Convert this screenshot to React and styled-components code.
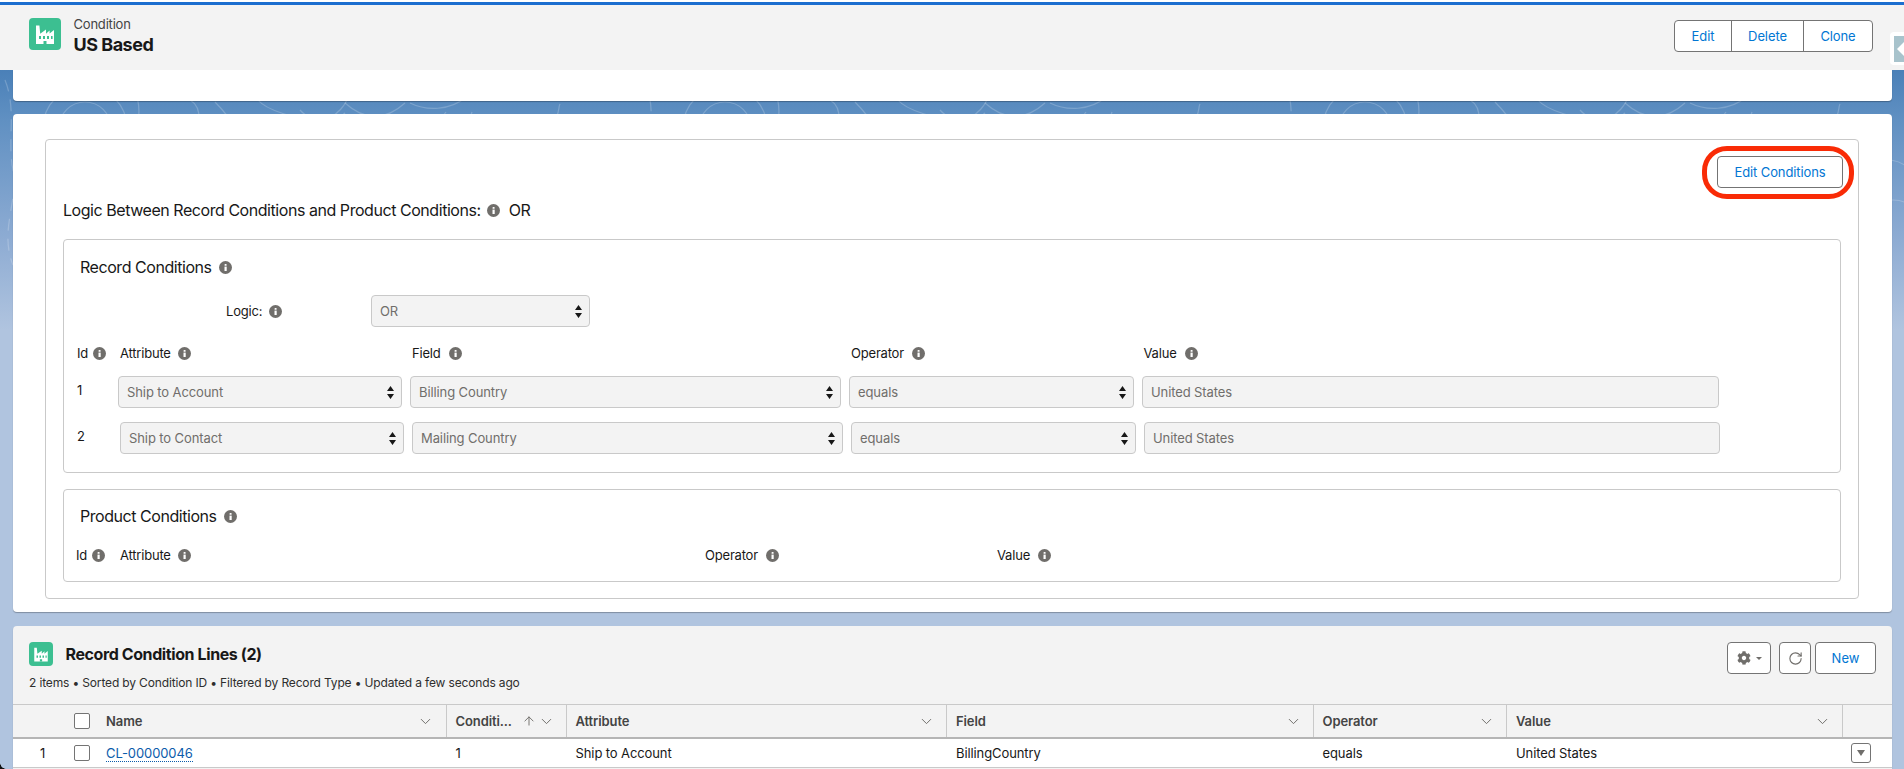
import React from "react";
import styled, { createGlobalStyle } from "styled-components";
import { ChevronDown, ArrowUp, RotateCw } from "lucide-react";
import { FaCog } from "react-icons/fa";

const GlobalStyle = createGlobalStyle`
  html, body { margin: 0; padding: 0; }
  body {
    font-family: "Inter", "Liberation Sans", sans-serif;
    font-size: 13px;
    color: #181818;
    background: #b0c4df;
  }
  * { box-sizing: border-box; }
`;

const Page = styled.div`
  position: relative;
  width: 1904px;
  height: 769px;
  overflow: hidden;
  background: linear-gradient(180deg, #4a80b8 70px, #6090c2 120px, #8eacd3 240px, #b0c4df 330px);
`;

const Swirls = styled.svg`
  position: absolute;
  left: 0;
  top: 70px;
  width: 1904px;
  height: 270px;
`;

const TopStrip = styled.div`
  position: relative;
  height: 5px;
  background: #fff;
  border-bottom: 3px solid #1b6ecf;
`;

const PageHeader = styled.header`
  position: relative;
  height: 65px;
  padding: 13px 31px 0 29px;
  display: flex;
  justify-content: space-between;
  align-items: flex-start;
  background: #f3f3f3;
`;

const HeaderTitle = styled.div`
  display: flex;
  gap: 12.5px;
  padding-top: 0;
`;

const IconTile = styled.div`
  width: ${(p) => p.$size}px;
  height: ${(p) => p.$size}px;
  border-radius: 4px;
  background: #3cbf91;
  flex: none;
  svg { display: block; width: 100%; height: 100%; }
`;

const TitleStack = styled.div`
  display: flex;
  flex-direction: column;
`;

const Eyebrow = styled.div`
  font-size: 13px;
  line-height: 14px;
  margin-top: -1px;
  letter-spacing: -0.2px;
  color: #444;
`;

const RecordName = styled.div`
  font-size: 18px;
  line-height: 22px;
  margin-top: 3px;
  font-weight: 700;
  letter-spacing: -0.5px;
`;

const ButtonGroup = styled.div`
  display: flex;
  height: 32px;
  margin-top: 2px;
  border: 1px solid #747474;
  border-radius: 4px;
  background: #fff;
  overflow: hidden;
`;

const GroupButton = styled.div`
  width: ${(p) => p.$width}px;
  display: flex;
  align-items: center;
  justify-content: center;
  color: #0176d3;
  letter-spacing: -0.1px;
  & + & { border-left: 1px solid #747474; }
`;

const SideTab = styled.div`
  position: absolute;
  right: 0;
  top: 32px;
  width: 14px;
  height: 33px;
  padding: 4px 0 3px 4px;
  background: #fff;
  border-radius: 4px 0 0 4px;
`;

const SideTabInner = styled.div`
  height: 100%;
  display: flex;
  align-items: center;
  padding-left: 3px;
  background: #a8c3cc;
  &::before {
    content: "";
    border-style: solid;
    border-width: 7px 7px 7px 0;
    border-color: transparent #fff transparent transparent;
  }
`;

const Main = styled.main`
  position: relative;
  padding: 0 12px 0 13px;
`;

const Card = styled.section`
  background: #fff;
  border-radius: 4px;
  box-shadow: 0 1px 1px rgba(0, 0, 0, 0.28);
`;

const BlankCard = styled(Card)`
  height: 31px;
  border-radius: 0 0 4px 4px;
`;

const ConditionsCard = styled(Card)`
  margin-top: 13px;
  height: 498px;
  padding: 25px 33px 0 32px;
`;

const OuterBox = styled.div`
  height: 460px;
  padding: 16px 17px 0;
  border: 1px solid #c9c9c9;
  border-radius: 4px;
`;

const ActionRow = styled.div`
  display: flex;
  justify-content: flex-end;
  margin-right: -2px;
`;

const EditButton = styled.div`
  position: relative;
  width: 126px;
  height: 32px;
  display: flex;
  align-items: center;
  justify-content: center;
  border: 1px solid #747474;
  border-radius: 4px;
  color: #0176d3;
  letter-spacing: -0.1px;
  &::after {
    content: "";
    position: absolute;
    top: -11px;
    bottom: -12px;
    left: -16px;
    right: -12px;
    border: 5px solid #f92b06;
    border-radius: 25px;
  }
`;

const LogicLine = styled.div`
  display: flex;
  align-items: center;
  height: 20px;
  margin: 12px 0 19px;
  font-size: 16px;
  letter-spacing: -0.45px;
`;

const LogicValue = styled.span`
  margin-left: 9px;
`;

const InnerBox = styled.div`
  padding: ${(p) => p.$pad};
  border: 1px solid #c9c9c9;
  border-radius: 4px;
  & + & { margin-top: 16px; }
`;

const BoxHeading = styled.h3`
  display: flex;
  align-items: center;
  height: 20px;
  margin: 0 0 0 16px;
  font-size: 16px;
  font-weight: 400;
  letter-spacing: -0.45px;
`;

const InfoWrap = styled.svg`
  width: 13px;
  height: 13px;
  flex: none;
  margin-left: ${(p) => p.$gap ?? 7}px;
`;

const LogicRow = styled.div`
  display: flex;
  align-items: center;
  margin: 18px 0 16px;
  padding-left: 162px;
`;

const LogicLabel = styled.div`
  width: 145px;
  display: flex;
  align-items: center;
  letter-spacing: -0.2px;
`;

const ColumnHeads = styled.div`
  display: flex;
  height: 20px;
  padding-left: ${(p) => p.$left}px;
`;

const ColumnHead = styled.div`
  width: ${(p) => p.$width}px;
  display: flex;
  align-items: center;
  letter-spacing: -0.2px;
`;

const ConditionRow = styled.div`
  display: flex;
  gap: 8px;
  margin-top: ${(p) => p.$top}px;
`;

const RowId = styled.div`
  width: ${(p) => p.$width}px;
  margin-right: -8px;
  padding-left: 13px;
  line-height: 28px;
`;

const Control = styled.div`
  position: relative;
  width: ${(p) => p.$width}px;
  height: 32px;
  padding-left: 8px;
  display: flex;
  align-items: center;
  flex: none;
  background: #f3f3f3;
  border: 1px solid #c9c9c9;
  border-radius: 4px;
  color: #706e6b;
  letter-spacing: -0.1px;
`;

const UpDown = styled.svg`
  position: absolute;
  right: 7px;
  top: 9px;
  width: 7px;
  height: 13px;
  fill: #181818;
`;

const RelatedCard = styled(Card)`
  margin-top: 14px;
  background: #f3f3f3;
  height: 160px;
`;

const RelatedHeader = styled.div`
  height: 78px;
  padding: 16px 16px 0;
`;

const RelatedTop = styled.div`
  display: flex;
  justify-content: space-between;
  height: 32px;
`;

const RelatedTitle = styled.div`
  display: flex;
  gap: 12.5px;
  font-size: 16px;
  line-height: 24px;
  font-weight: 700;
  letter-spacing: -0.4px;
`;

const ListActions = styled.div`
  display: flex;
  gap: 4px;
`;

const ListButton = styled.div`
  width: ${(p) => p.$width}px;
  height: 32px;
  margin-right: ${(p) => p.$after || 0}px;
  display: flex;
  align-items: center;
  justify-content: center;
  gap: 5px;
  background: #fff;
  border: 1px solid #747474;
  border-radius: 4px;
  color: ${(p) => (p.$primary ? "#0176d3" : "#706e6b")};
`;

const MiniCaret = styled.span`
  border-style: solid;
  border-width: 3.5px 3px 0;
  border-color: #706e6b transparent transparent;
`;

const ListMeta = styled.div`
  margin-top: 1px;
  font-size: 12px;
  line-height: 16px;
  letter-spacing: -0.15px;
  color: #2e2e2e;
`;

const TABLE_COLUMNS = "60px 32px 341.5px 120px 380.5px 366.5px 193.5px 336px 49px";

const TableHead = styled.div`
  display: grid;
  grid-template-columns: ${TABLE_COLUMNS};
  height: 35px;
  border-top: 1px solid #c9c9c9;
  border-bottom: 2px solid #b5b5b5;
`;

const HeadCell = styled.div`
  display: flex;
  align-items: center;
  justify-content: space-between;
  height: 32px;
  padding: 0 ${(p) => (p.$first ? 12 : 11)}px 0 ${(p) => (p.$first ? 1 : 9)}px;
  border-right: ${(p) => (p.$plain ? "none" : "1px solid #c9c9c9")};
  font-weight: 600;
  color: #444;
  letter-spacing: -0.1px;
  svg { color: #706e6b; flex: none; }
`;

const SortIcons = styled.span`
  display: flex;
  align-items: center;
  gap: 2px;
`;

const TableRow = styled.div`
  display: grid;
  grid-template-columns: ${TABLE_COLUMNS};
  align-items: center;
  height: 29px;
  background: #fff;
  border-bottom: 1px solid #c9c9c9;
`;

const RowCell = styled.div`
  padding-left: ${(p) => p.$left ?? 9}px;
  letter-spacing: -0.1px;
`;

const RowLink = styled.span`
  color: #0b5cab;
  border-bottom: 1px dotted #0b5cab;
`;

const CheckBox = styled.div`
  width: 16px;
  height: 16px;
  background: #fff;
  border: 1px solid #747474;
  border-radius: 2px;
`;

const RowMenu = styled.div`
  width: 20px;
  height: 20px;
  margin-left: 8px;
  display: flex;
  align-items: center;
  justify-content: center;
  border: 1px solid #747474;
  border-radius: 3px;
  &::before {
    content: "";
    border-style: solid;
    border-width: 6px 4px 0;
    border-color: #706e6b transparent transparent;
  }
`;

const WindowCorner = styled.div`
  position: absolute;
  left: 0;
  bottom: 0;
  width: 6px;
  height: 6px;
  background: radial-gradient(circle at 100% 0, transparent 5.5px, #111 6px);
`;

const InfoIcon = ({ gap }) => (
  <InfoWrap $gap={gap} viewBox="0 0 13 13">
    <circle cx="6.5" cy="6.5" r="6.5" fill="#706e6b" />
    <rect x="5.5" y="5.6" width="2.2" height="4.4" fill="#fff" />
    <rect x="5.5" y="2.9" width="2.2" height="1.9" rx="0.9" fill="#fff" />
  </InfoWrap>
);

const FactoryTile = ({ size }) => (
  <IconTile $size={size}>
    <svg viewBox="0 0 32 32">
      <path d="M7 26V7.5h3.4l.8 8.3 5.8-4.3v4.3l3.6-3.4v3.2l4.4-3.6V26z" fill="#fff" />
      <path d="M10 18h2v3h-2zM14 18h2v3h-2zM18 18h2v3h-2zM22 18h1.6v3H22zM14.5 23h3v3h-3z" fill="#3cbf91" />
    </svg>
  </IconTile>
);

const SelectField = ({ width, children }) => (
  <Control $width={width}>
    {children}
    <UpDown viewBox="0 0 7 13">
      <path d="M3.5 0 7 5H0zM0 8h7l-3.5 5z" />
    </UpDown>
  </Control>
);

const Background = () => (
  <Swirls viewBox="0 0 1904 270" fill="none">
    <defs>
      <pattern id="swirl" width="640" height="270" patternUnits="userSpaceOnUse">
        <g stroke="rgba(255,255,255,0.2)" strokeWidth="1.2">
          <circle cx="85" cy="58" r="26" />
          <circle cx="85" cy="58" r="42" />
          <path d="M5 10c12 30 2 60 8 90s-14 60 0 95" strokeDasharray="12 8" />
          <path d="M120 0c30 30 20 60 0 90" />
          <path d="M190 30c14 8 10 30 0 45" />
          <path d="M215 32c20 20 25 35 30 50" />
          <path d="M258 30c8 10 40 20 60 20s30-20 30-24" />
          <path d="M300 40c12 14 35 14 46 2" strokeDasharray="8 6" />
          <path d="M345 33c20 18 40 18 60 0" />
          <path d="M410 33c16 8 40 8 56-6" />
          <path d="M440 50l6-8M470 48l2-6M556 48c4-8 2-10 4-14" />
          <path d="M560 120c30-40 70-40 80 0" />
          <path d="M575 150c30-30 50-20 65-10" />
        </g>
      </pattern>
    </defs>
    <rect width="1904" height="270" fill="url(#swirl)" />
  </Swirls>
);

const App = () => (
  <Page>
    <GlobalStyle />
    <Background />
    <TopStrip />
    <PageHeader>
      <HeaderTitle>
        <FactoryTile size={32} />
        <TitleStack>
          <Eyebrow>Condition</Eyebrow>
          <RecordName>US Based</RecordName>
        </TitleStack>
      </HeaderTitle>
      <ButtonGroup>
        <GroupButton $width={56}>Edit</GroupButton>
        <GroupButton $width={72}>Delete</GroupButton>
        <GroupButton $width={69}>Clone</GroupButton>
      </ButtonGroup>
    </PageHeader>
    <SideTab>
      <SideTabInner />
    </SideTab>

    <Main>
      <BlankCard />

      <ConditionsCard>
        <OuterBox>
          <ActionRow>
            <EditButton>Edit Conditions</EditButton>
          </ActionRow>
          <LogicLine>
            Logic Between Record Conditions and Product Conditions:
            <InfoIcon gap={6} />
            <LogicValue>OR</LogicValue>
          </LogicLine>

          <InnerBox $pad="17px 0 18px">
            <BoxHeading>
              Record Conditions
              <InfoIcon />
            </BoxHeading>
            <LogicRow>
              <LogicLabel>
                Logic:
                <InfoIcon />
              </LogicLabel>
              <SelectField width={219}>OR</SelectField>
            </LogicRow>
            <ColumnHeads $left={13}>
              <ColumnHead $width={43}>
                Id
                <InfoIcon gap={5} />
              </ColumnHead>
              <ColumnHead $width={292}>
                Attribute
                <InfoIcon />
              </ColumnHead>
              <ColumnHead $width={439}>
                Field
                <InfoIcon gap={8} />
              </ColumnHead>
              <ColumnHead $width={292.5}>
                Operator
                <InfoIcon gap={8} />
              </ColumnHead>
              <ColumnHead $width={100}>
                Value
                <InfoIcon gap={8} />
              </ColumnHead>
            </ColumnHeads>
            <ConditionRow $top={13}>
              <RowId $width={54}>1</RowId>
              <SelectField width={284}>Ship to Account</SelectField>
              <SelectField width={431}>Billing Country</SelectField>
              <SelectField width={285}>equals</SelectField>
              <Control $width={577}>United States</Control>
            </ConditionRow>
            <ConditionRow $top={14}>
              <RowId $width={56}>2</RowId>
              <SelectField width={284}>Ship to Contact</SelectField>
              <SelectField width={431}>Mailing Country</SelectField>
              <SelectField width={285}>equals</SelectField>
              <Control $width={576}>United States</Control>
            </ConditionRow>
          </InnerBox>

          <InnerBox $pad="16px 0">
            <BoxHeading>
              Product Conditions
              <InfoIcon />
            </BoxHeading>
            <ColumnHeads $left={12} style={{ marginTop: 19 }}>
              <ColumnHead $width={44}>
                Id
                <InfoIcon gap={5} />
              </ColumnHead>
              <ColumnHead $width={585}>
                Attribute
                <InfoIcon />
              </ColumnHead>
              <ColumnHead $width={292}>
                Operator
                <InfoIcon gap={8} />
              </ColumnHead>
              <ColumnHead $width={100}>
                Value
                <InfoIcon gap={8} />
              </ColumnHead>
            </ColumnHeads>
          </InnerBox>
        </OuterBox>
      </ConditionsCard>

      <RelatedCard>
        <RelatedHeader>
          <RelatedTop>
            <RelatedTitle>
              <FactoryTile size={24} />
              Record Condition Lines (2)
            </RelatedTitle>
            <ListActions>
              <ListButton $width={44} $after={4}>
                <FaCog size={14} />
                <MiniCaret />
              </ListButton>
              <ListButton $width={32}>
                <RotateCw size={15} strokeWidth={1.8} />
              </ListButton>
              <ListButton $width={61} $primary>New</ListButton>
            </ListActions>
          </RelatedTop>
          <ListMeta>2 items • Sorted by Condition ID • Filtered by Record Type • Updated a few seconds ago</ListMeta>
        </RelatedHeader>
        <TableHead>
          <div />
          <HeadCell $first $plain><CheckBox /></HeadCell>
          <HeadCell $first>
            Name
            <ChevronDown size={17} strokeWidth={1.4} />
          </HeadCell>
          <HeadCell>
            Conditi...
            <SortIcons>
              <ArrowUp size={14} strokeWidth={1.6} />
              <ChevronDown size={17} strokeWidth={1.4} />
            </SortIcons>
          </HeadCell>
          <HeadCell>
            Attribute
            <ChevronDown size={17} strokeWidth={1.4} />
          </HeadCell>
          <HeadCell>
            Field
            <ChevronDown size={17} strokeWidth={1.4} />
          </HeadCell>
          <HeadCell>
            Operator
            <ChevronDown size={17} strokeWidth={1.4} />
          </HeadCell>
          <HeadCell>
            Value
            <ChevronDown size={17} strokeWidth={1.4} />
          </HeadCell>
          <HeadCell $plain />
        </TableHead>
        <TableRow>
          <RowCell $left={27}>1</RowCell>
          <RowCell $left={1}><CheckBox /></RowCell>
          <RowCell $left={1}><RowLink>CL-00000046</RowLink></RowCell>
          <RowCell>1</RowCell>
          <RowCell>Ship to Account</RowCell>
          <RowCell>BillingCountry</RowCell>
          <RowCell>equals</RowCell>
          <RowCell>United States</RowCell>
          <RowMenu />
        </TableRow>
      </RelatedCard>
    </Main>
    <WindowCorner />
  </Page>
);

export default App;
